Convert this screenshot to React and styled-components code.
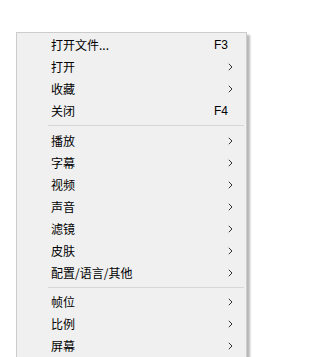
import React from 'react';
import styled, { createGlobalStyle } from 'styled-components';

const GlobalStyle = createGlobalStyle`
  html, body {
    margin: 0;
    padding: 0;
    background: #fff;
  }
  body {
    font-family: "Noto Sans CJK SC", "Liberation Sans", sans-serif;
    overflow: hidden;
  }
`;

const Page = styled.div`
  padding: 32px 0 0 16px;
  height: 357px;
  box-sizing: border-box;
  overflow: hidden;
`;

const Menu = styled.div`
  width: 231px;
  background: #f0f0f0;
  border: 1px solid #cccccc;
  box-shadow: 3px 3px 2px rgba(0, 0, 0, 0.28);
  padding: 1px 0;
  box-sizing: border-box;
`;

const Item = styled.div`
  display: flex;
  align-items: center;
  height: 22px;
  padding: 0 10px 0 34px;
  font-size: 12px;
  color: #000;
`;

const Label = styled.span`
  flex: 1;
  line-height: 22px;
`;

const Shortcut = styled.span`
  font-family: "Liberation Sans", sans-serif;
  font-size: 12px;
  margin-right: 8px;
`;

const Arrow = styled.svg`
  width: 5px;
  height: 8px;
  margin-right: 3px;
`;

const Separator = styled.div`
  height: 1px;
  background: #d7d7d7;
  margin: 3px 2px ${(p) => (p.$tight ? '3px' : '4px')} 31px;
`;

const SubArrow = () => (
  <Arrow viewBox="0 0 5 8">
    <path d="M0.8 0.8 L4 4 L0.8 7.2" fill="none" stroke="#333" strokeWidth="1" />
  </Arrow>
);

const groups = [
  [
    { label: '打开文件...', key: 'F3' },
    { label: '打开', sub: true },
    { label: '收藏', sub: true },
    { label: '关闭', key: 'F4' },
  ],
  [
    { label: '播放', sub: true },
    { label: '字幕', sub: true },
    { label: '视频', sub: true },
    { label: '声音', sub: true },
    { label: '滤镜', sub: true },
    { label: '皮肤', sub: true },
    { label: '配置/语言/其他', sub: true },
  ],
  [
    { label: '帧位', sub: true },
    { label: '比例', sub: true },
    { label: '屏幕', sub: true },
  ],
];

export default function App() {
  return (
    <>
      <GlobalStyle />
      <Page>
        <Menu>
          {groups.map((group, gi) => (
            <React.Fragment key={gi}>
              {gi > 0 && <Separator $tight={gi > 1} />}
              {group.map((item) => (
                <Item key={item.label}>
                  <Label>{item.label}</Label>
                  {item.key && <Shortcut>{item.key}</Shortcut>}
                  {item.sub && <SubArrow />}
                </Item>
              ))}
            </React.Fragment>
          ))}
        </Menu>
      </Page>
    </>
  );
}
